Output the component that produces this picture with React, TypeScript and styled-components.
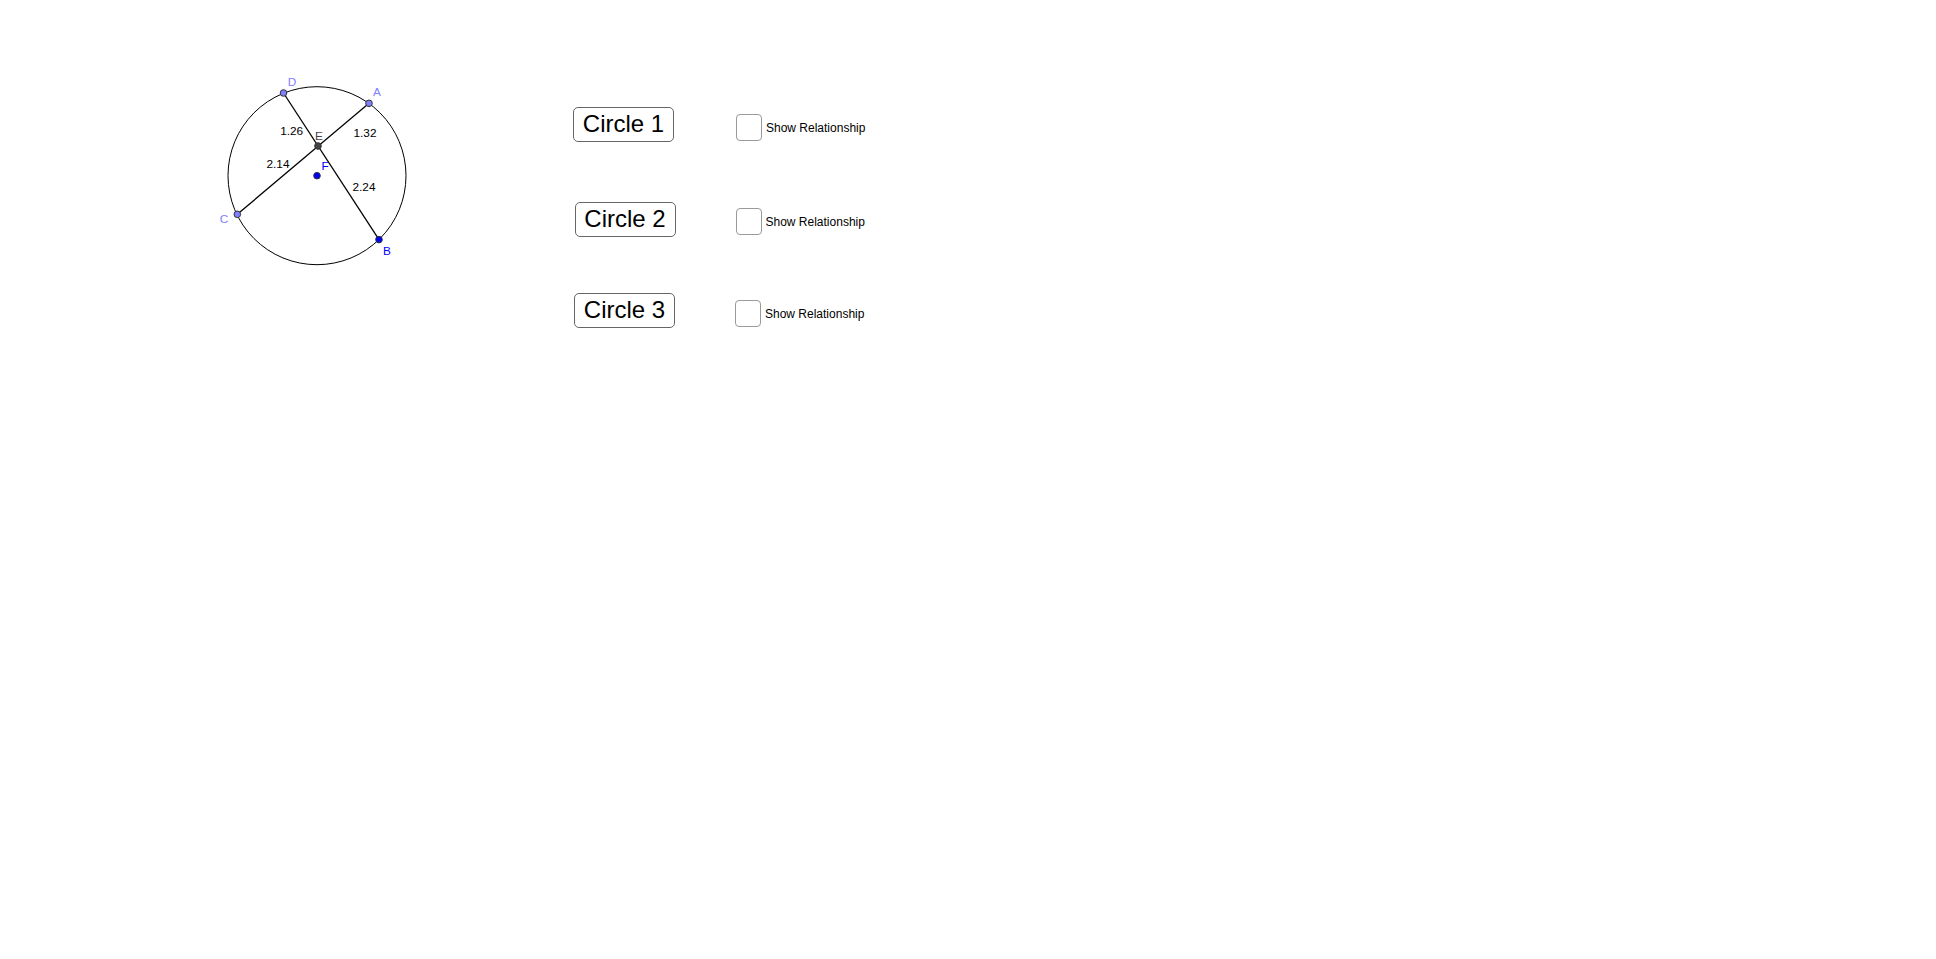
import React from 'react';
import styled, { createGlobalStyle } from 'styled-components';

const GlobalStyle = createGlobalStyle`
  html, body {
    margin: 0;
    padding: 0;
    background: #ffffff;
  }
  body {
    font-family: 'Liberation Sans', Arial, sans-serif;
    color: #000000;
  }
`;

const Applet = styled.div`
  display: flex;
  flex-direction: row;
  align-items: flex-start;
  width: 1936px;
  height: 959px;
  background: #ffffff;
`;

const Figure = styled.svg`
  display: block;
  flex-shrink: 0;
  margin: 70px 0 0 200px;
  overflow: visible;
`;

const Controls = styled.div`
  display: flex;
  flex-direction: column;
  margin: 107px 0 0 153px;
`;

const Row = styled.div<{ $gap: number; $dx: number }>`
  display: flex;
  flex-direction: row;
  align-items: flex-start;
  margin-top: ${(p) => p.$gap}px;
  margin-left: ${(p) => p.$dx}px;
`;

const CircleButton = styled.button`
  width: 101px;
  height: 35px;
  box-sizing: border-box;
  padding: 0 0 1px;
  border: 1.5px solid #666666;
  border-radius: 5px;
  background: #ffffff;
  font-family: 'Liberation Sans', Arial, sans-serif;
  font-size: 24px;
  color: #000000;
  cursor: pointer;
  display: flex;
  align-items: center;
  justify-content: center;
`;

const CheckGroup = styled.label<{ $dy: number; $dx: number }>`
  display: flex;
  flex-direction: row;
  align-items: center;
  gap: 4px;
  margin-top: ${(p) => p.$dy}px;
  margin-left: ${(p) => p.$dx}px;
  cursor: pointer;
`;

const Box = styled.span`
  width: 26px;
  height: 27px;
  box-sizing: border-box;
  border: 1.5px solid #9a9a9a;
  border-radius: 4px;
  background: #ffffff;
`;

const CheckText = styled.span`
  font-size: 12px;
  color: #000000;
  white-space: nowrap;
`;

const LIGHT = '#8080ff';
const BLUE = '#0000ff';
const GRAY = '#444444';

const points = [
  { name: 'D', x: 283.5, y: 93, fill: LIGHT, lx: 292, ly: 82, lc: LIGHT },
  { name: 'A', x: 369, y: 103.3, fill: LIGHT, lx: 377, ly: 92, lc: LIGHT },
  { name: 'C', x: 237.3, y: 214.3, fill: LIGHT, lx: 224, ly: 219, lc: LIGHT },
  { name: 'B', x: 379, y: 239.6, fill: BLUE, lx: 387, ly: 250.5, lc: BLUE },
  { name: 'E', x: 318, y: 146, fill: GRAY, lx: 319, ly: 135.5, lc: GRAY },
  { name: 'F', x: 317, y: 175.7, fill: BLUE, lx: 325, ly: 165.5, lc: BLUE },
];

const lengths = [
  { t: '1.26', x: 291.7, y: 130.5 },
  { t: '1.32', x: 365, y: 132.5 },
  { t: '2.14', x: 278, y: 163.5 },
  { t: '2.24', x: 364, y: 186.5 },
];

const ChordDiagram = () => (
  <Figure width={220} height={200} viewBox="200 70 220 200">
    <circle cx={317} cy={175.7} r={89} fill="none" stroke="#000" strokeWidth={1} />
    <line x1={283.5} y1={93} x2={379} y2={239.6} stroke="#000" strokeWidth={1.3} />
    <line x1={369} y1={103.3} x2={237.3} y2={214.3} stroke="#000" strokeWidth={1.3} />
    {lengths.map((l) => (
      <text
        key={l.t}
        x={l.x}
        y={l.y}
        fontSize={11.8}
        fontFamily="'Liberation Sans', Arial, sans-serif"
        fill="#000"
        textAnchor="middle"
        dominantBaseline="central"
      >
        {l.t}
      </text>
    ))}
    {points.map((p) => (
      <g key={p.name}>
        <circle cx={p.x} cy={p.y} r={3.3} fill={p.fill} stroke="#333" strokeWidth={1} />
        <text
          x={p.lx}
          y={p.ly}
          fontSize={11.8}
          fontFamily="'Liberation Sans', Arial, sans-serif"
          fill={p.lc}
          textAnchor="middle"
          dominantBaseline="central"
        >
          {p.name}
        </text>
      </g>
    ))}
  </Figure>
);

const rows = [
  { label: 'Circle 1', gap: 0, dx: 0, dy: 7, cdx: 62 },
  { label: 'Circle 2', gap: 60, dx: 1.5, dy: 6, cdx: 60 },
  { label: 'Circle 3', gap: 56, dx: 1, dy: 7.3, cdx: 60 },
];

export default function App() {
  return (
    <>
      <GlobalStyle />
      <Applet>
        <ChordDiagram />
        <Controls>
          {rows.map((r) => (
            <Row key={r.label} $gap={r.gap} $dx={r.dx}>
              <CircleButton type="button">{r.label}</CircleButton>
              <CheckGroup $dy={r.dy} $dx={r.cdx}>
                <Box />
                <CheckText>Show Relationship</CheckText>
              </CheckGroup>
            </Row>
          ))}
        </Controls>
      </Applet>
    </>
  );
}
